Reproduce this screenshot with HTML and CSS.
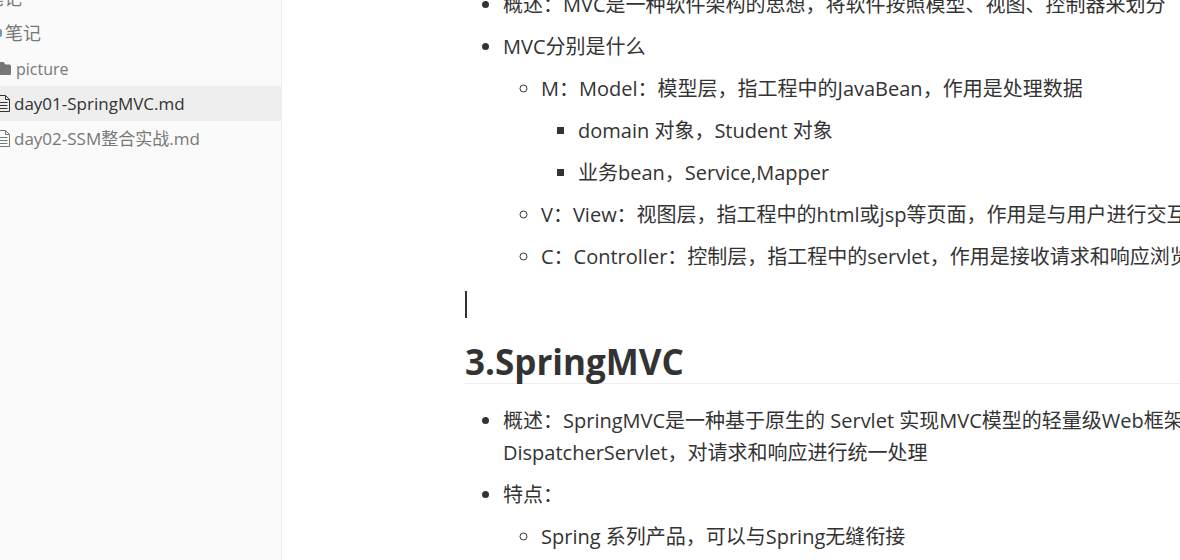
FILE: index.html
```html
<!DOCTYPE html>
<html lang="zh">
<head>
<meta charset="utf-8">
<title>day01-SpringMVC.md</title>
<link rel="stylesheet" href="styles.css">
</head>
<body>
<div class="app">
  <aside class="sidebar">
    <div class="tree">
      <div class="row root-top"><span class="label">笔记</span></div>
      <div class="row root"><span class="dot"></span><span class="label">笔记</span></div>
      <div class="row item">
        <svg class="icon" viewBox="0 0 11 13" width="11" height="13"><path d="M0 0h3.500l2 2.500H9.500a1.500 1.500 0 0 1 1.500 1.500V11.500a1.500 1.500 0 0 1-1.500 1.500H0z" fill="#777"/></svg>
        <span class="label">picture</span>
      </div>
      <div class="row file active">
        <svg class="icon" viewBox="0 0 10 17" width="10" height="17"><path d="M-2 .5H5.500L9.500 4.500V16.500H-2z M5.500 .5V4.500H9.500 M0 7.500H7.500 M0 10.500H7.500 M0 13.500H7.500" fill="none" stroke="#333"/></svg>
        <span class="label">day01-SpringMVC.md</span>
      </div>
      <div class="row file">
        <svg class="icon" viewBox="0 0 10 17" width="10" height="17"><path d="M-2 .5H5.500L9.500 4.500V16.500H-2z M5.500 .5V4.500H9.500 M0 7.500H7.500 M0 10.500H7.500 M0 13.500H7.500" fill="none" stroke="#777"/></svg>
        <span class="label">day02-SSM整合实战.md</span>
      </div>
    </div>
  </aside>
  <main class="content">
    <div class="doc">
      <ul class="l1">
        <li>概述：MVC是一种软件架构的思想，将软件按照模型、视图、控制器来划分</li>
        <li>MVC分别是什么
          <ul class="l2">
            <li>M：Model：模型层，指工程中的JavaBean，作用是处理数据
              <ul class="l3">
                <li>domain 对象，Student 对象</li>
                <li>业务bean，Service,Mapper</li>
              </ul>
            </li>
            <li>V：View：视图层，指工程中的html或jsp等页面，作用是与用户进行交互，展示数据</li>
            <li>C：Controller：控制层，指工程中的servlet，作用是接收请求和响应浏览器</li>
          </ul>
        </li>
      </ul>
      <div class="caret"></div>
      <h2>3.SpringMVC</h2>
      <ul class="l1">
        <li>概述：SpringMVC是一种基于原生的 Servlet 实现MVC模型的轻量级Web框架，核心是<br>DispatcherServlet，对请求和响应进行统一处理</li>
        <li>特点：
          <ul class="l2">
            <li>Spring 系列产品，可以与Spring无缝衔接</li>
          </ul>
        </li>
      </ul>
    </div>
  </main>
</div>
</body>
</html>
```
FILE: styles.css
```css
html, body {
  margin: 0;
  padding: 0;
  height: 100%;
  overflow: hidden;
  background: #fff;
}
body {
  font-family: "Open Sans", "Noto Sans CJK SC", sans-serif;
  color: #333;
}
.app {
  display: flex;
  height: 560px;
  overflow: hidden;
}
.sidebar {
  width: 281px;
  flex: none;
  background: #fafafa;
  border-right: 1px solid #eee;
  overflow: hidden;
}
.tree {
  margin-top: -19px;
}
.row {
  display: flex;
  align-items: center;
  height: 35px;
  color: #777;
  font-size: 17px;
  line-height: 24px;
}
.root-top, .root {
  font-size: 18px;
}
.root-top {
  height: 34px;
}
.root-top .label {
  margin-left: -14px;
}
.root {
  height: 36px;
}
.dot {
  width: 2px;
  height: 8px;
  background: #6a9ac4;
  border-radius: 0 4px 4px 0;
  margin-right: 3px;
}
.item {
  font-size: 16px;
}
.item .icon {
  margin-right: 5px;
}
.file .icon {
  margin-right: 4px;
}
.active {
  background: #eee;
  color: #333;
}
.content {
  flex: 1;
  min-width: 0;
  overflow: hidden;
  padding-left: 183px;
}
.doc {
  width: 900px;
  margin-top: -11px;
  font-size: 20px;
  line-height: 32px;
}
ul {
  margin: 0;
  padding-left: 38px;
}
.l1 {
  list-style: disc;
}
.l2 {
  list-style: circle;
  margin-top: 10px;
}
.l3 {
  list-style: square;
  padding-left: 37px;
  margin-top: 10px;
}
li {
  margin-bottom: 10px;
}
li:last-child {
  margin-bottom: 0;
}
.caret {
  width: 2px;
  height: 27px;
  margin-top: 18px;
  background: #333;
}
h2 {
  margin: 22px 0 21px;
  font-size: 35px;
  line-height: 43px;
  font-weight: 700;
  border-bottom: 1px solid #eee;
}
```
